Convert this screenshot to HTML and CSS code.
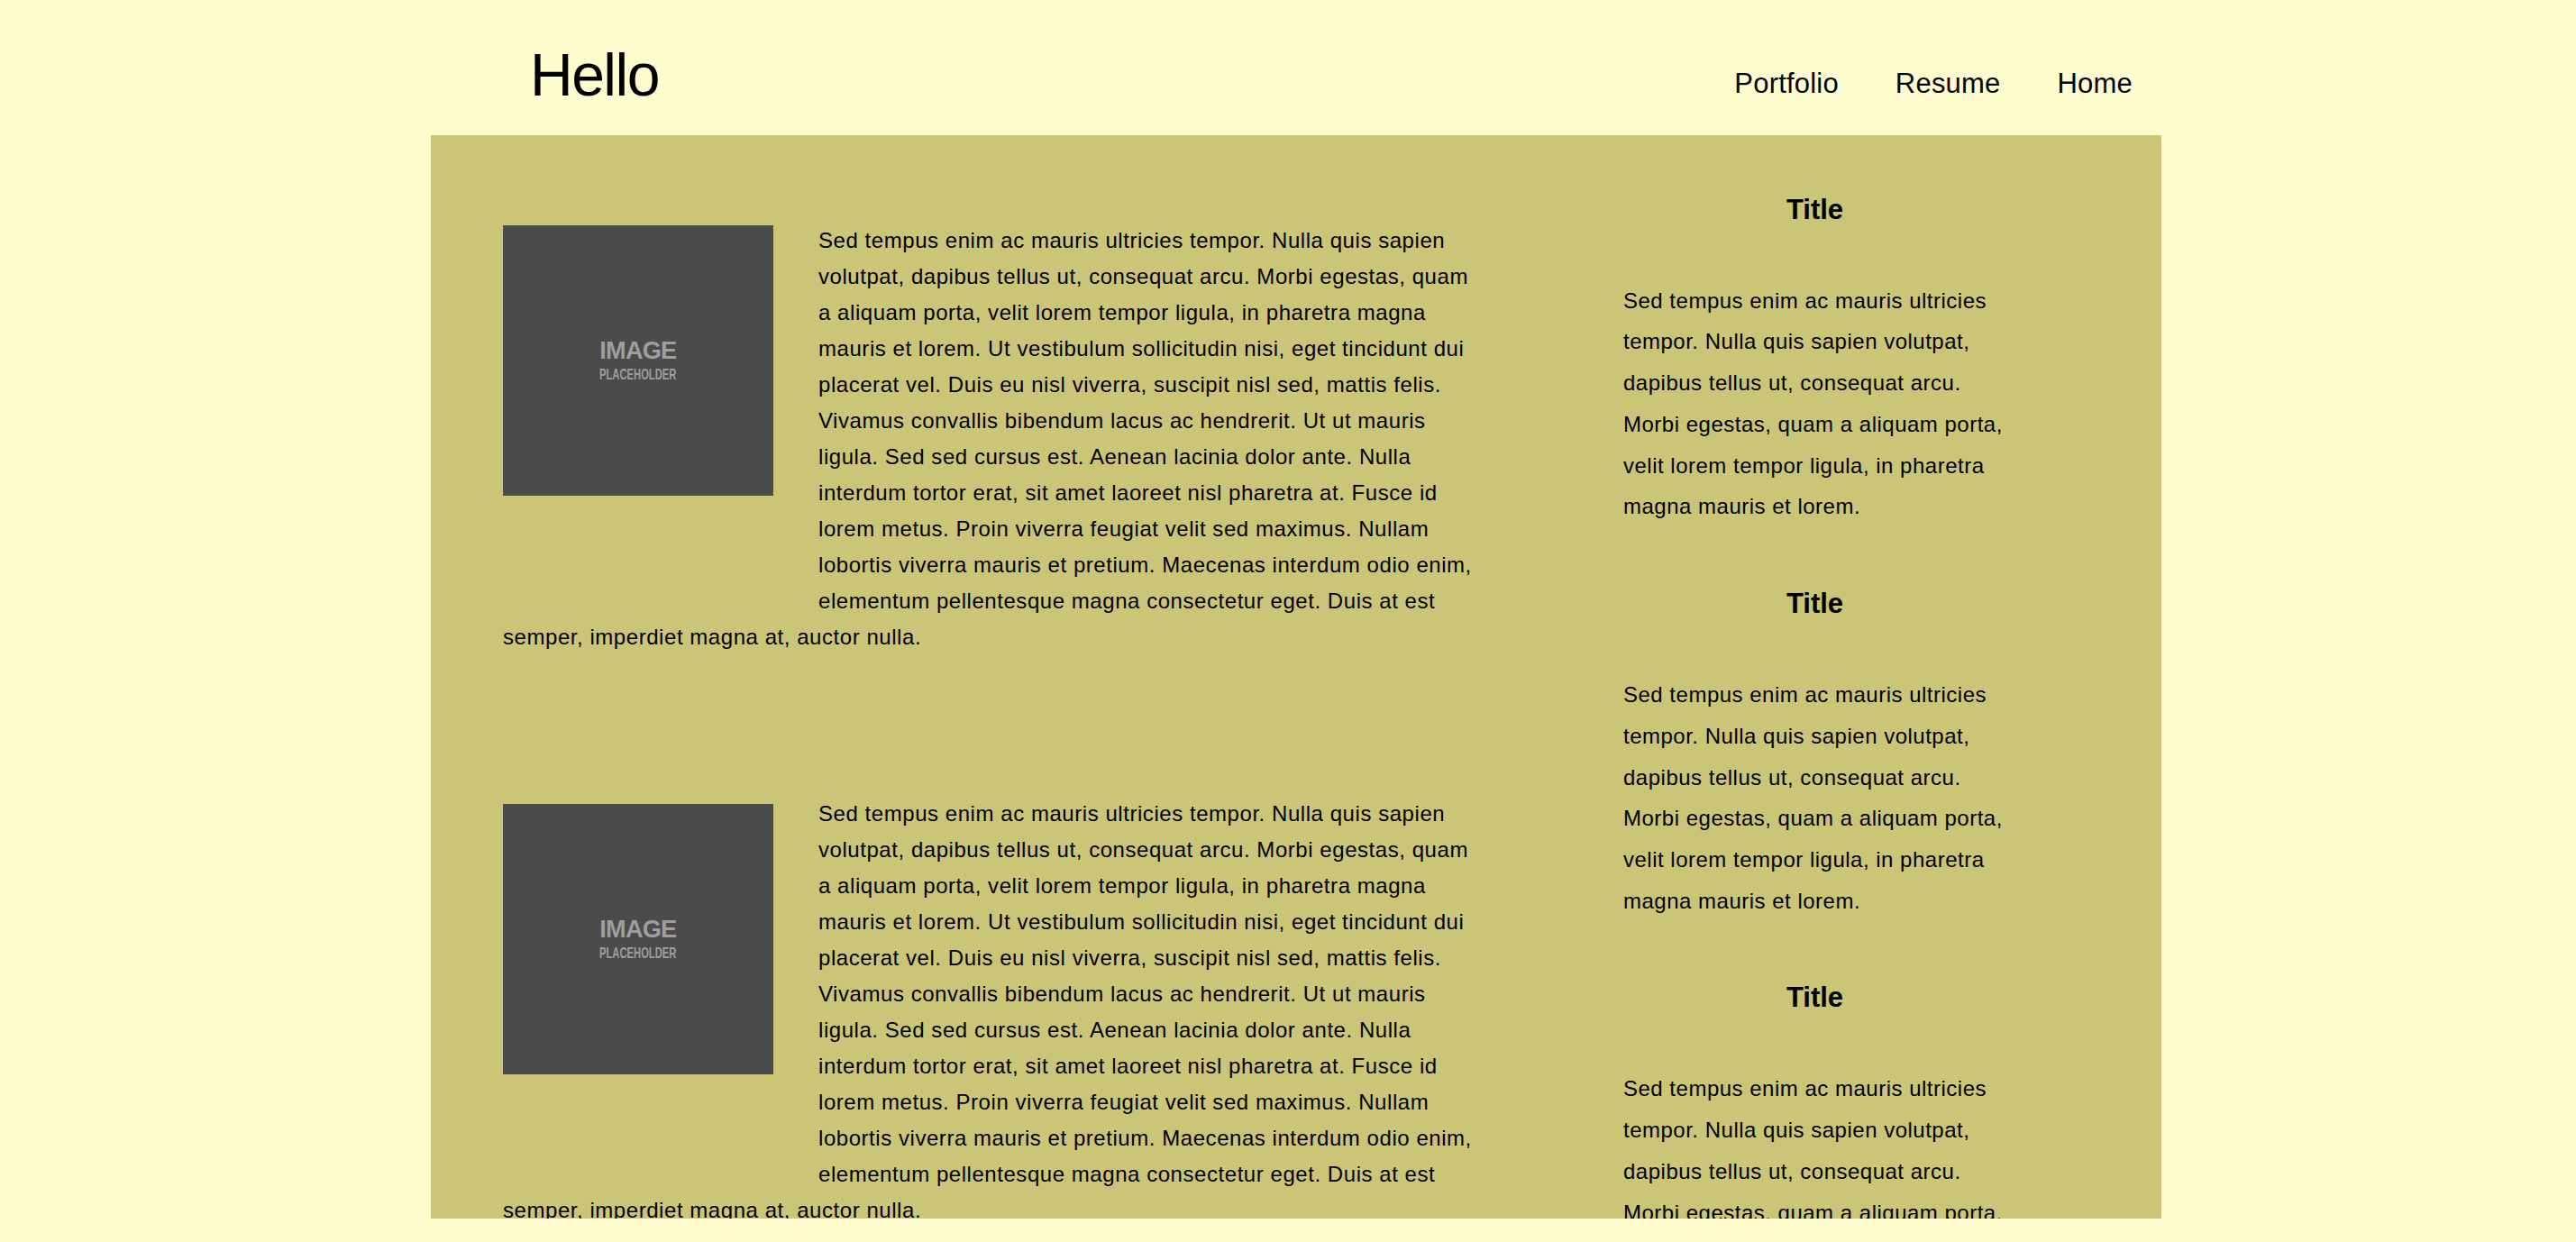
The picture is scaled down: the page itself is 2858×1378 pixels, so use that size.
FILE: index.html
```html
<!DOCTYPE html>
<html lang="en">
<head>
<meta charset="utf-8">
<title>Hello</title>
<link rel="stylesheet" href="styles.css">
</head>
<body>
<div class="page">
  <header class="site-header">
    <h1 class="brand">Hello</h1>
    <nav class="nav">
      <a class="nav-link" href="#">Portfolio</a>
      <a class="nav-link" href="#">Resume</a>
      <a class="nav-link" href="#">Home</a>
    </nav>
  </header>
  <main class="content">
    <section class="posts">
      <article class="post post-first">
        <div class="thumb"><span class="thumb-big">IMAGE</span><span class="thumb-small">PLACEHOLDER</span></div>
        <p class="post-text">Sed tempus enim ac mauris ultricies tempor. Nulla quis sapien volutpat, dapibus tellus ut, consequat arcu. Morbi egestas, quam a aliquam porta, velit lorem tempor ligula, in pharetra magna mauris et lorem. Ut vestibulum sollicitudin nisi, eget tincidunt dui placerat vel. Duis eu nisl viverra, suscipit nisl sed, mattis felis. Vivamus convallis bibendum lacus ac hendrerit. Ut ut mauris ligula. Sed sed cursus est. Aenean lacinia dolor ante. Nulla interdum tortor erat, sit amet laoreet nisl pharetra at. Fusce id lorem metus. Proin viverra feugiat velit sed maximus. Nullam lobortis viverra mauris et pretium. Maecenas interdum odio enim, elementum pellentesque magna consectetur eget. Duis at est semper, imperdiet magna at, auctor nulla.</p>
      </article>
      <article class="post post-second">
        <div class="thumb"><span class="thumb-big">IMAGE</span><span class="thumb-small">PLACEHOLDER</span></div>
        <p class="post-text">Sed tempus enim ac mauris ultricies tempor. Nulla quis sapien volutpat, dapibus tellus ut, consequat arcu. Morbi egestas, quam a aliquam porta, velit lorem tempor ligula, in pharetra magna mauris et lorem. Ut vestibulum sollicitudin nisi, eget tincidunt dui placerat vel. Duis eu nisl viverra, suscipit nisl sed, mattis felis. Vivamus convallis bibendum lacus ac hendrerit. Ut ut mauris ligula. Sed sed cursus est. Aenean lacinia dolor ante. Nulla interdum tortor erat, sit amet laoreet nisl pharetra at. Fusce id lorem metus. Proin viverra feugiat velit sed maximus. Nullam lobortis viverra mauris et pretium. Maecenas interdum odio enim, elementum pellentesque magna consectetur eget. Duis at est semper, imperdiet magna at, auctor nulla.</p>
      </article>
    </section>
    <aside class="sidebar">
      <div class="side-block">
        <h3 class="side-title">Title</h3>
        <p class="side-text">Sed tempus enim ac mauris ultricies tempor. Nulla quis sapien volutpat, dapibus tellus ut, consequat arcu. Morbi egestas, quam a aliquam porta, velit lorem tempor ligula, in pharetra magna mauris et lorem.</p>
      </div>
      <div class="side-block">
        <h3 class="side-title">Title</h3>
        <p class="side-text">Sed tempus enim ac mauris ultricies tempor. Nulla quis sapien volutpat, dapibus tellus ut, consequat arcu. Morbi egestas, quam a aliquam porta, velit lorem tempor ligula, in pharetra magna mauris et lorem.</p>
      </div>
      <div class="side-block">
        <h3 class="side-title">Title</h3>
        <p class="side-text">Sed tempus enim ac mauris ultricies tempor. Nulla quis sapien volutpat, dapibus tellus ut, consequat arcu. Morbi egestas, quam a aliquam porta, velit lorem tempor ligula, in pharetra magna mauris et lorem.</p>
      </div>
    </aside>
  </main>
</div>
</body>
</html>
```

FILE: styles.css
```css
html, body {
  margin: 0;
  padding: 0;
}

body {
  background: #fffdd0;
  color: #000;
  font-family: "Liberation Sans", Arial, Helvetica, sans-serif;
  overflow: hidden;
}

.page {
  width: 1920px;
  margin-left: 478px;
}

/* Header */
.site-header {
  height: 150px;
  display: flex;
  justify-content: space-between;
  align-items: flex-start;
  padding: 0 32px 0 110px;
  box-sizing: border-box;
}

.brand {
  margin: 43px 0 0;
  font-size: 66px;
  line-height: 80px;
  font-weight: 400;
  letter-spacing: -1.5px;
}

.nav {
  display: flex;
  gap: 63px;
  margin-top: 72.5px;
}

.nav-link {
  color: #000;
  text-decoration: none;
  font-size: 31px;
  line-height: 40px;
  letter-spacing: 0.2px;
}

/* Main panel */
.content {
  background: #cbc577;
  height: 1202px;
  overflow: hidden;
  display: flex;
  align-items: flex-start;
  padding-left: 80px;
  box-sizing: border-box;
}

.posts {
  width: 1083px;
  flex: none;
  padding-top: 97px;
}

.post {
  display: flow-root;
  margin-bottom: 156px;
}

.thumb {
  float: left;
  width: 300px;
  height: 300px;
  margin: 3px 50px 120px 0;
  background: #4b4b4b;
  display: flex;
  flex-direction: column;
  align-items: center;
  justify-content: center;
  font-family: "Liberation Sans", Arial, sans-serif;
  font-weight: 700;
  color: #9e9e9e;
}

.post-second .thumb {
  margin-top: 9px;
}

.thumb-big {
  display: block;
  font-size: 28px;
  line-height: 30px;
  letter-spacing: -0.8px;
  transform: scaleX(0.97);
}

.thumb-small {
  display: block;
  font-size: 17px;
  line-height: 20px;
  margin-top: 2px;
  transform: scaleX(0.66);
}

.post-text {
  margin: 0;
  font-size: 24px;
  line-height: 40px;
  letter-spacing: 0.55px;
}

/* Sidebar */
.sidebar {
  flex: none;
  width: 430px;
  margin-left: 160px;
  padding-top: 62.5px;
}

.side-block {
  margin-bottom: 64.7px;
}

.side-title {
  margin: 0 0 58px;
  padding-right: 5px;
  text-align: center;
  font-size: 31px;
  line-height: 40px;
  font-weight: 700;
}

.side-text {
  margin: 0;
  font-size: 24px;
  line-height: 45.8px;
  letter-spacing: 0.5px;
}
```
